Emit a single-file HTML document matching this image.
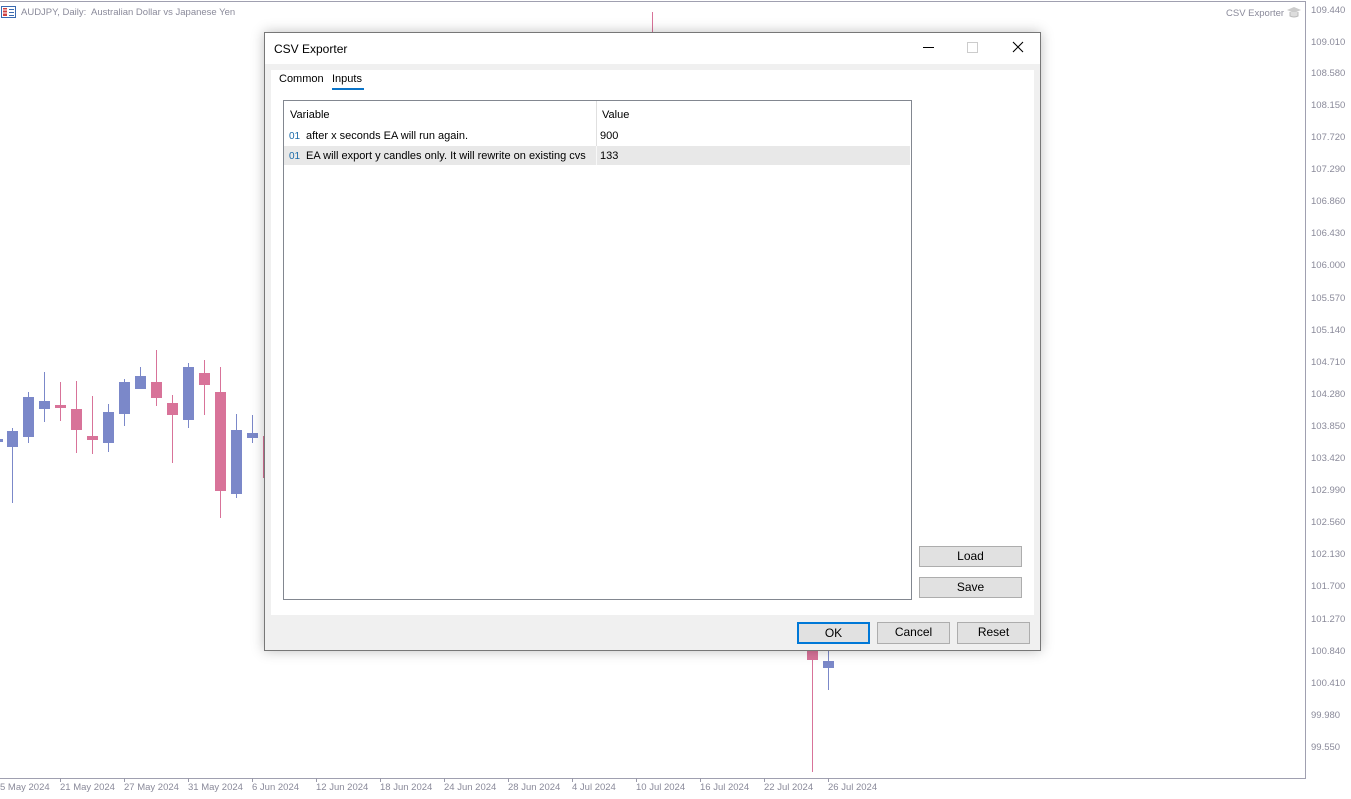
<!DOCTYPE html>
<html><head><meta charset="utf-8"><style>
body{margin:0;width:1351px;height:799px;background:#fff;position:relative;overflow:hidden;font-family:"Liberation Sans",sans-serif;}
.a{position:absolute}
.pl{position:absolute;left:1311px;font-size:9.5px;color:#8a8a9a;margin-top:1px}
.dl{position:absolute;top:782px;font-size:9.5px;color:#8a8a9a;}
.dt{position:absolute;top:778px;width:1px;height:4px;background:#9a9aaa}
.btn{position:absolute;background:#e1e1e1;border:1px solid #adadad;font-size:12px;text-align:center;box-sizing:border-box;line-height:18px;color:#000}
</style></head><body>
<div class="a" style="left:0;top:1px;width:1306px;height:1px;background:#a0a0b0"></div>
<div class="a" style="left:1305px;top:1px;width:1px;height:778px;background:#a0a0b0"></div>
<div class="a" style="left:0;top:778px;width:1306px;height:1px;background:#a0a0b0"></div>
<svg class="a" style="left:1px;top:6px" width="15" height="12"><rect x="0.5" y="0.5" width="14" height="11" fill="#fff" stroke="#3a6ab0"/><rect x="2" y="2" width="4" height="8" fill="#d04040"/><rect x="8" y="3" width="5" height="1" fill="#3a6ab0"/><rect x="8" y="6" width="5" height="1" fill="#3a6ab0"/><rect x="8" y="9" width="5" height="1" fill="#3a6ab0"/><line x1="2" y1="4" x2="6" y2="4" stroke="#fff"/><line x1="2" y1="7" x2="6" y2="7" stroke="#fff"/></svg>
<div class="a" style="left:21px;top:7px;font-size:9.5px;color:#8a8a9a">AUDJPY, Daily:&nbsp; Australian Dollar vs Japanese Yen</div>
<div class="a" style="left:1226px;top:8px;font-size:9.5px;color:#8a8a9a">CSV Exporter</div>
<svg class="a" style="left:1286px;top:5px" width="16" height="14"><path d="M1 5 L8 2 L15 5 L8 8Z" fill="#ccc"/><path d="M4 7 V11 Q8 13 12 11 V7" fill="#ddd" stroke="#bbb"/></svg>
<div class="pl" style="top:4px">109.440</div><div class="pl" style="top:36px">109.010</div><div class="pl" style="top:67px">108.580</div><div class="pl" style="top:99px">108.150</div><div class="pl" style="top:131px">107.720</div><div class="pl" style="top:163px">107.290</div><div class="pl" style="top:195px">106.860</div><div class="pl" style="top:227px">106.430</div><div class="pl" style="top:259px">106.000</div><div class="pl" style="top:292px">105.570</div><div class="pl" style="top:324px">105.140</div><div class="pl" style="top:356px">104.710</div><div class="pl" style="top:388px">104.280</div><div class="pl" style="top:420px">103.850</div><div class="pl" style="top:452px">103.420</div><div class="pl" style="top:484px">102.990</div><div class="pl" style="top:516px">102.560</div><div class="pl" style="top:548px">102.130</div><div class="pl" style="top:580px">101.700</div><div class="pl" style="top:613px">101.270</div><div class="pl" style="top:645px">100.840</div><div class="pl" style="top:677px">100.410</div><div class="pl" style="top:709px">99.980</div><div class="pl" style="top:741px">99.550</div>
<div class="dl" style="left:0">5 May 2024</div><div class="dl" style="left:60px">21 May 2024</div><div class="dl" style="left:124px">27 May 2024</div><div class="dl" style="left:188px">31 May 2024</div><div class="dl" style="left:252px">6 Jun 2024</div><div class="dl" style="left:316px">12 Jun 2024</div><div class="dl" style="left:380px">18 Jun 2024</div><div class="dl" style="left:444px">24 Jun 2024</div><div class="dl" style="left:508px">28 Jun 2024</div><div class="dl" style="left:572px">4 Jul 2024</div><div class="dl" style="left:636px">10 Jul 2024</div><div class="dl" style="left:700px">16 Jul 2024</div><div class="dl" style="left:764px">22 Jul 2024</div><div class="dl" style="left:828px">26 Jul 2024</div>
<div class="dt" style="left:60px"></div><div class="dt" style="left:124px"></div><div class="dt" style="left:188px"></div><div class="dt" style="left:252px"></div><div class="dt" style="left:316px"></div><div class="dt" style="left:380px"></div><div class="dt" style="left:444px"></div><div class="dt" style="left:508px"></div><div class="dt" style="left:572px"></div><div class="dt" style="left:636px"></div><div class="dt" style="left:700px"></div><div class="dt" style="left:764px"></div><div class="dt" style="left:828px"></div>
<svg class="a" style="left:0;top:0" width="1300" height="778">
<g stroke-width="1">
<g stroke="#7b88c9"><line x1="12.5" y1="428" x2="12.5" y2="503"/><line x1="28.5" y1="392" x2="28.5" y2="443"/><line x1="44.5" y1="372" x2="44.5" y2="422"/><line x1="108.5" y1="404" x2="108.5" y2="452"/><line x1="124.5" y1="379" x2="124.5" y2="426"/><line x1="140.5" y1="367" x2="140.5" y2="389"/><line x1="188.5" y1="363" x2="188.5" y2="428"/><line x1="236.5" y1="414" x2="236.5" y2="498"/><line x1="252.5" y1="415" x2="252.5" y2="443"/><line x1="828.5" y1="651" x2="828.5" y2="690"/></g>
<g stroke="#d87399"><line x1="60.5" y1="382" x2="60.5" y2="421"/><line x1="76.5" y1="381" x2="76.5" y2="453"/><line x1="92.5" y1="396" x2="92.5" y2="454"/><line x1="156.5" y1="350" x2="156.5" y2="406"/><line x1="172.5" y1="395" x2="172.5" y2="463"/><line x1="204.5" y1="360" x2="204.5" y2="415"/><line x1="220.5" y1="367" x2="220.5" y2="518"/><line x1="812.5" y1="651" x2="812.5" y2="772"/><line x1="652.5" y1="12" x2="652.5" y2="33"/></g>
</g>
<g fill="#7b88c9"><rect x="0" y="439" width="3" height="3"/><rect x="7" y="431" width="11" height="16"/><rect x="23" y="397" width="11" height="40"/><rect x="39" y="401" width="11" height="8"/><rect x="103" y="412" width="11" height="31"/><rect x="119" y="382" width="11" height="32"/><rect x="135" y="376" width="11" height="13"/><rect x="183" y="367" width="11" height="53"/><rect x="231" y="430" width="11" height="64"/><rect x="247" y="433" width="11" height="5"/><rect x="823" y="661" width="11" height="7"/></g>
<g fill="#d87399"><rect x="55" y="405" width="11" height="3"/><rect x="71" y="409" width="11" height="21"/><rect x="87" y="436" width="11" height="4"/><rect x="151" y="382" width="11" height="16"/><rect x="167" y="403" width="11" height="12"/><rect x="199" y="373" width="11" height="12"/><rect x="215" y="392" width="11" height="99"/><rect x="263" y="436" width="3" height="42"/><rect x="807" y="651" width="11" height="9"/></g>
</svg>
<div class="a" style="left:264px;top:32px;width:777px;height:619px;border:1px solid #777;box-sizing:border-box;background:#f0f0f0;box-shadow:0 0 12px rgba(0,0,0,0.25)">
<div class="a" style="left:0;top:0;width:775px;height:31px;background:#fff"></div>
<div class="a" style="left:9px;top:9px;font-size:12px;color:#000">CSV Exporter</div>
<div class="a" style="left:658px;top:14px;width:11px;height:1px;background:#000"></div>
<div class="a" style="left:702px;top:9px;width:9px;height:9px;border:1px solid #ccc"></div>
<svg class="a" style="left:747px;top:8px" width="12" height="12"><path d="M1 1L11 11M11 1L1 11" stroke="#000" stroke-width="1.1"/></svg>
<div class="a" style="left:6px;top:37px;width:763px;height:545px;background:#fff"></div>
<div class="a" style="left:14px;top:40px;font-size:11px;color:#000">Common</div>
<div class="a" style="left:67px;top:40px;font-size:11px;color:#000">Inputs</div>
<div class="a" style="left:67px;top:55px;width:32px;height:2px;background:#0a74c8"></div>
<div class="a" style="left:18px;top:67px;width:629px;height:500px;border:1px solid #828790;box-sizing:border-box;background:#fff">
<div class="a" style="left:312px;top:0;width:1px;height:64px;background:#e0e0e0"></div>
<div class="a" style="left:6px;top:8px;font-size:11px">Variable</div>
<div class="a" style="left:318px;top:8px;font-size:11px">Value</div>
<div class="a" style="left:0;top:45px;width:626px;height:19px;background:#e8e8e8"></div>
<div class="a" style="left:312px;top:45px;width:1px;height:19px;background:#f8f8f8"></div>
<div class="a" style="left:5px;top:30px;font-size:10px;color:#1a6aa8">01</div>
<div class="a" style="left:22px;top:29px;font-size:11px">after x seconds EA will run again.</div>
<div class="a" style="left:316px;top:29px;font-size:11px">900</div>
<div class="a" style="left:5px;top:50px;font-size:10px;color:#1a6aa8">01</div>
<div class="a" style="left:22px;top:49px;font-size:11px">EA will export y candles only. It will rewrite on existing cvs</div>
<div class="a" style="left:316px;top:49px;font-size:11px">133</div>
</div>
<div class="btn" style="left:654px;top:513px;width:103px;height:21px">Load</div>
<div class="btn" style="left:654px;top:544px;width:103px;height:21px">Save</div>
<div class="btn" style="left:532px;top:589px;width:73px;height:22px;border:2px solid #0078d7;line-height:18px">OK</div>
<div class="btn" style="left:612px;top:589px;width:73px;height:22px">Cancel</div>
<div class="btn" style="left:692px;top:589px;width:73px;height:22px">Reset</div>
</div>
</body></html>
